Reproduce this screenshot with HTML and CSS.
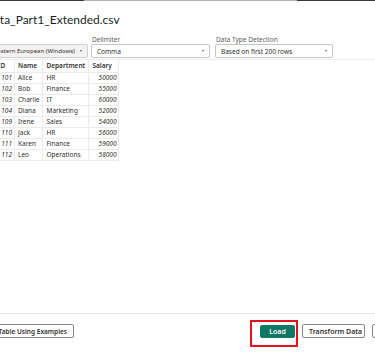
FILE: index.html
```html
<!DOCTYPE html>
<html lang="en">
<head>
  <meta charset="UTF-8" />
  <title>Data_Part1_Extended.csv</title>
  <link rel="stylesheet" href="styles.css">
</head>
<body>
  <div class="topbar">
    <span class="seg dark-left"></span>
    <span class="seg light"></span>
    <span class="seg dark-right"></span>
  </div>

  <div class="dialog">
    <h1 class="title">Data_Part1_Extended.csv</h1>

    <div class="options">
      <div class="field origin">
        <span class="field-label">File Origin</span>
        <div class="select disabled">1252: Western European (Windows)<span class="caret"></span></div>
      </div>
      <div class="field delimiter">
        <span class="field-label">Delimiter</span>
        <div class="select">Comma<span class="caret"></span></div>
      </div>
      <div class="field detection">
        <span class="field-label">Data Type Detection</span>
        <div class="select">Based on first 200 rows<span class="caret"></span></div>
      </div>
    </div>

    <div class="preview">
      <table class="grid">
        <thead>
          <tr>
            <th class="col-id">ID</th>
            <th class="col-name">Name</th>
            <th class="col-dept">Department</th>
            <th class="col-salary">Salary</th>
          </tr>
        </thead>
        <tbody>
          <tr><td class="num">101</td><td>Alice</td><td>HR</td><td class="num">50000</td></tr>
          <tr><td class="num">102</td><td>Bob</td><td>Finance</td><td class="num">55000</td></tr>
          <tr><td class="num">103</td><td>Charlie</td><td>IT</td><td class="num">60000</td></tr>
          <tr><td class="num">104</td><td>Diana</td><td>Marketing</td><td class="num">52000</td></tr>
          <tr><td class="num">109</td><td>Irene</td><td>Sales</td><td class="num">54000</td></tr>
          <tr><td class="num">110</td><td>Jack</td><td>HR</td><td class="num">56000</td></tr>
          <tr><td class="num">111</td><td>Karen</td><td>Finance</td><td class="num">59000</td></tr>
          <tr><td class="num">112</td><td>Leo</td><td>Operations</td><td class="num">58000</td></tr>
        </tbody>
      </table>
    </div>

    <div class="footer">
      <button class="btn extract">Extract Table Using Examples</button>
      <span class="highlight"><button class="btn primary">Load</button></span>
      <button class="btn transform">Transform Data</button>
      <button class="btn">Cancel</button>
    </div>
  </div>
</body>
</html>
```

FILE: styles.css
```css
body {
  margin: 0;
  width: 375px;
  height: 355px;
  overflow: hidden;
  background: #ffffff;
  font-family: "Noto Sans", "Open Sans", sans-serif;
  color: #252423;
}

.topbar {
  display: flex;
  height: 1px;
}
.seg { display: block; height: 1px; }
.dark-left { width: 84px; background: #3a3a3a; }
.light { width: 213px; background: #b4b4b4; }
.dark-right { flex: 1; background: #3a3a3a; }

.dialog {
  margin-left: -40px;
  width: 470px;
}

.title {
  margin: 11px 0 0 25px;
  font-family: Lato, "Noto Sans", sans-serif;
  font-size: 12px;
  font-weight: normal;
  line-height: 16px;
  color: #201f1e;
  white-space: nowrap;
}

.options {
  display: flex;
  align-items: flex-end;
  padding: 8px 0 1px 0;
  border-bottom: 1px solid #ececec;
}
.field {
  display: flex;
  flex-direction: column;
}
.field-label {
  font-size: 6.5px;
  line-height: 8px;
  color: #605e5c;
  padding-left: 1px;
}
.origin { width: 128px; margin-right: 3px; }
.delimiter { width: 119px; margin-right: 5px; }
.detection { width: 118px; }

.select {
  position: relative;
  height: 14px;
  line-height: 13px;
  padding-left: 5px;
  font-size: 6.5px;
  color: #323130;
  border: 1px solid #c8c6c4;
  border-radius: 2px;
  background: #ffffff;
  white-space: nowrap;
  overflow: hidden;
  box-sizing: border-box;
}
.select.disabled {
  padding-left: 14px;
  font-size: 6px;
  background: #f3f2f1;
  border-color: #d2d0ce;
}
.caret {
  position: absolute;
  right: 5px;
  top: 5px;
  border-left: 1.5px solid transparent;
  border-right: 1.5px solid transparent;
  border-top: 2px solid #605e5c;
}

.preview {
  height: 253px;
  border-bottom: 1px solid #e6e6e6;
}

.grid {
  margin-left: 34px;
  border-collapse: collapse;
  font-size: 6.5px;
  color: #323130;
}
.grid th, .grid td {
  height: 11px;
  padding: 0 3px;
  border: 1px solid #ebebeb;
  white-space: nowrap;
  box-sizing: border-box;
}
.grid th {
  height: 12px;
  text-align: left;
  font-weight: 600;
  border-top: none;
}
.col-id { width: 20px; }
.col-name { width: 28px; }
.col-dept { width: 46px; }
.col-salary { width: 30px; }
.grid td.num {
  text-align: right;
  font-style: italic;
  padding-right: 2px;
}

.footer {
  display: flex;
  align-items: flex-start;
  padding-top: 10px;
}
.btn {
  height: 14px;
  padding: 0 6px;
  font-family: "Noto Sans", "Open Sans", sans-serif;
  font-size: 7px;
  font-weight: 600;
  color: #323130;
  background: #ffffff;
  border: 1px solid #8a8886;
  border-radius: 2px;
  white-space: nowrap;
}
.extract {
  width: 114px;
  margin-right: 176px;
  font-size: 6.5px;
  text-align: right;
}
.btn.primary {
  width: 35px;
  height: 13px;
  background: #117865;
  border-color: #117865;
  color: #ffffff;
}
.highlight {
  display: flex;
  margin-top: -4px;
  padding: 3px 1px 7px 8px;
  border: 2px solid #e3131b;
}
.transform {
  width: 63px;
  margin-left: 4px;
  margin-right: 7px;
}
```
